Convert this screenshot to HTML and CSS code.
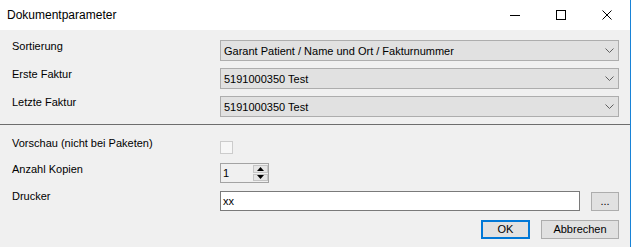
FILE: index.html
```html
<!DOCTYPE html>
<html lang="de">
<head>
    <meta charset="UTF-8">
    <title>Dokumentparameter</title>
    <link rel="stylesheet" href="styles.css">
</head>
<body>
    <div class="window">
        <div class="titlebar">
            <span class="title">Dokumentparameter</span>
            <div class="caption-buttons">
                <span class="cap-btn">
                    <svg width="10" height="10" viewBox="0 0 10 10"><path d="M0 5.5H10" stroke="#000" stroke-width="1"/></svg>
                </span>
                <span class="cap-btn">
                    <svg width="10" height="10" viewBox="0 0 10 10"><rect x="0.5" y="0.5" width="9" height="9" fill="none" stroke="#000" stroke-width="1"/></svg>
                </span>
                <span class="cap-btn">
                    <svg width="10" height="10" viewBox="0 0 10 10"><path d="M0.5 0.5L9.5 9.5M9.5 0.5L0.5 9.5" stroke="#000" stroke-width="1"/></svg>
                </span>
            </div>
        </div>

        <div class="content">
            <!-- Auswahl -->
            <div class="section section-top">
                <div class="row">
                    <label>Sortierung</label>
                    <div class="combo">
                        <span>Garant Patient / Name und Ort / Fakturnummer</span>
                        <svg class="chevron" width="9" height="5" viewBox="0 0 9 5"><path d="M0.5 0.5L4.5 4.5L8.5 0.5" fill="none" stroke="#606060" stroke-width="1"/></svg>
                    </div>
                </div>
                <div class="row">
                    <label>Erste Faktur</label>
                    <div class="combo">
                        <span>5191000350 Test</span>
                        <svg class="chevron" width="9" height="5" viewBox="0 0 9 5"><path d="M0.5 0.5L4.5 4.5L8.5 0.5" fill="none" stroke="#606060" stroke-width="1"/></svg>
                    </div>
                </div>
                <div class="row">
                    <label>Letzte Faktur</label>
                    <div class="combo">
                        <span>5191000350 Test</span>
                        <svg class="chevron" width="9" height="5" viewBox="0 0 9 5"><path d="M0.5 0.5L4.5 4.5L8.5 0.5" fill="none" stroke="#606060" stroke-width="1"/></svg>
                    </div>
                </div>
            </div>

            <div class="separator"></div>

            <!-- Druck -->
            <div class="section section-bottom">
                <div class="row row-check">
                    <label>Vorschau (nicht bei Paketen)</label>
                    <span class="checkbox"></span>
                </div>
                <div class="row row-spin">
                    <label>Anzahl Kopien</label>
                    <div class="spinner">
                        <span class="spinner-value">1</span>
                        <div class="spinner-buttons">
                            <span class="spin-btn"><svg width="7" height="4" viewBox="0 0 7 4"><path d="M3.5 0L7 4H0Z" fill="#000"/></svg></span>
                            <span class="spin-btn"><svg width="7" height="4" viewBox="0 0 7 4"><path d="M0 0H7L3.5 4Z" fill="#000"/></svg></span>
                        </div>
                    </div>
                </div>
                <div class="row row-printer">
                    <label>Drucker</label>
                    <div class="printer">
                        <div class="textbox">xx</div>
                        <button class="btn btn-browse">...</button>
                    </div>
                </div>
                <div class="actions">
                    <button class="btn btn-ok">OK</button>
                    <button class="btn btn-cancel">Abbrechen</button>
                </div>
            </div>
        </div>
    </div>
</body>
</html>
```

FILE: styles.css
```css
* {
    margin: 0;
    padding: 0;
    box-sizing: border-box;
}

body {
    background: #fff;
    font-family: 'Liberation Sans', Arial, sans-serif;
    font-size: 11px;
    color: #000;
}

/* Fenster */
.window {
    width: 631px;
    height: 247px;
    background: #f0f0f0;
    border-right: 1px solid #1883d7;
}

.titlebar {
    height: 30px;
    background: #fff;
    display: flex;
    align-items: center;
    justify-content: space-between;
}

.title {
    font-size: 12px;
    padding-left: 7px;
}

.caption-buttons {
    display: flex;
    height: 30px;
}

.cap-btn {
    width: 46px;
    display: flex;
    align-items: center;
    justify-content: center;
    padding-bottom: 1px;
}

.cap-btn svg {
    display: block;
}

/* Bereiche */
.section {
    padding-left: 12px;
    padding-right: 11px;
}

.section-top {
    padding-top: 10px;
    padding-bottom: 7px;
    display: flex;
    flex-direction: column;
    gap: 7px;
}

.separator {
    height: 1px;
    background: #6d6d6d;
}

.section-bottom {
    padding-top: 12px;
}

.row {
    display: grid;
    grid-template-columns: 208px 1fr;
    align-items: start;
    line-height: 13px;
}

.row label {
    white-space: nowrap;
}

/* Combobox */
.combo {
    height: 21px;
    background: #e1e1e1;
    border: 1px solid #adadad;
    display: flex;
    align-items: center;
    justify-content: space-between;
    padding-left: 3px;
    padding-right: 3px;
    padding-top: 2px;
}

.combo .chevron {
    display: block;
    margin-right: 1px;
    margin-top: -2px;
}

/* Checkbox */
.row-check {
    height: 26px;
}

.checkbox {
    width: 13px;
    height: 13px;
    margin-top: 4px;
    border: 1px solid #cccccc;
    background: #f7f7f7;
}

/* Zähler */
.row-spin {
    height: 27px;
}

.spinner {
    width: 49px;
    height: 20px;
    border: 1px solid #a3a3a3;
    background: #f0f0f0;
    display: flex;
    justify-content: space-between;
}

.spinner-value {
    padding-left: 2px;
    padding-top: 3px;
}

.spinner-buttons {
    width: 15px;
    display: flex;
    flex-direction: column;
    gap: 1px;
    padding: 1px 0;
}

.spin-btn {
    flex: 1;
    background: #e5e5e5;
    border: 1px solid #c4c4c4;
    display: flex;
    align-items: center;
    justify-content: center;
}

.spin-btn svg {
    display: block;
}

/* Drucker */
.row-printer {
    height: 30px;
}

.printer {
    display: flex;
    justify-content: space-between;
    align-items: start;
}

.textbox {
    width: 360px;
    height: 20px;
    margin-top: 1px;
    background: #fff;
    border: 1px solid #7a7a7a;
    padding-left: 2px;
    padding-top: 3px;
}

/* Schaltflächen */
.btn {
    font-family: 'Liberation Sans', Arial, sans-serif;
    font-size: 11px;
    color: #000;
    background: #e1e1e1;
    border: 1px solid #adadad;
    height: 19px;
    line-height: 15px;
}

.btn-browse {
    width: 28px;
    margin-top: 2px;
}

.actions {
    display: flex;
    justify-content: flex-end;
    gap: 11px;
}

.btn-ok {
    width: 49px;
    border: 2px solid #0078d7;
}

.btn-cancel {
    width: 78px;
}
```
